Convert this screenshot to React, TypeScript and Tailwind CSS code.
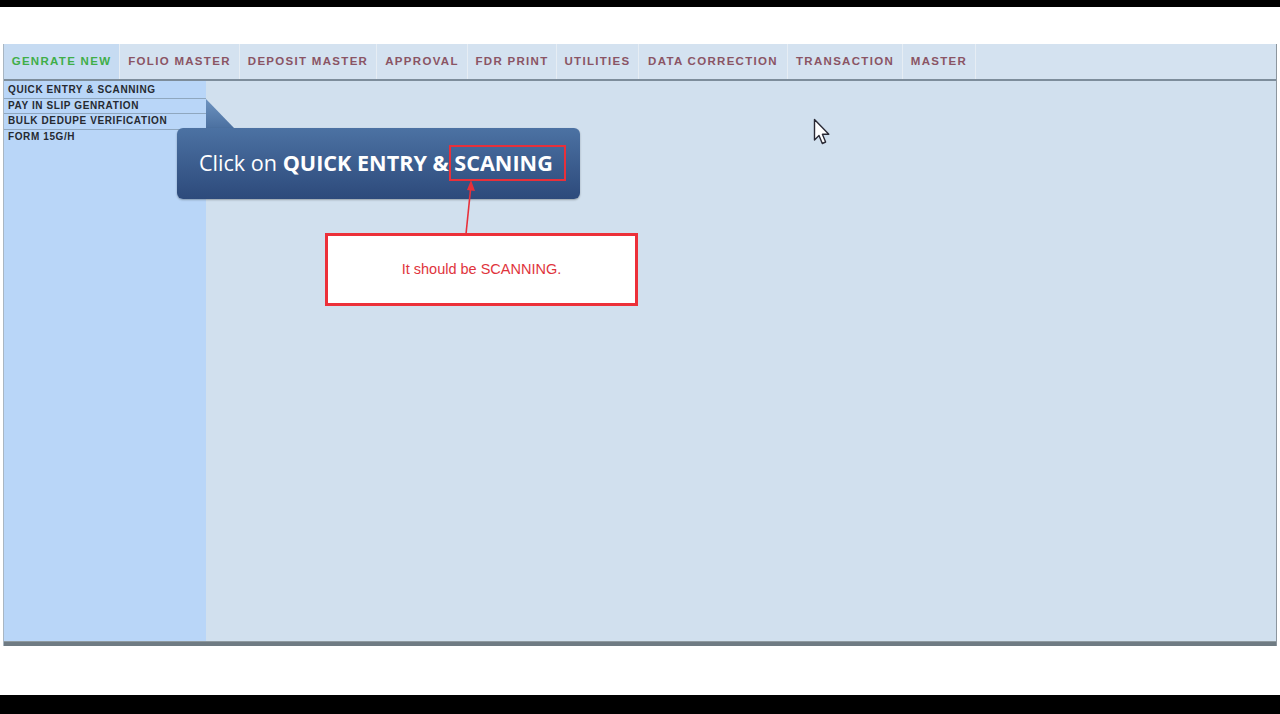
import React from "react";

const tabs = [
  { label: "GENRATE NEW", active: true, w: "w-[116px]" },
  { label: "FOLIO MASTER", w: "w-[120px]" },
  { label: "DEPOSIT MASTER", w: "w-[137px]" },
  { label: "APPROVAL", w: "w-[91px]" },
  { label: "FDR PRINT", w: "w-[89px]" },
  { label: "UTILITIES", w: "w-[82px]" },
  { label: "DATA CORRECTION", w: "w-[149px]" },
  { label: "TRANSACTION", w: "w-[115px]" },
  { label: "MASTER", w: "w-[73px]" },
];

const menu = ["QUICK ENTRY & SCANNING", "PAY IN SLIP GENRATION", "BULK DEDUPE VERIFICATION", "FORM 15G/H"];

export default function App() {
  return (
    <div className="w-[1280px] h-[714px] bg-white flex flex-col overflow-hidden" style={{ fontFamily: '"Liberation Sans", Arial, sans-serif' }}>
      <div className="h-[7px] bg-black shrink-0" />
      <div className="h-[37px] bg-white shrink-0" />
      <div className="relative ml-[3px] w-[1274px] h-[602px] flex flex-col border-r border-[#8c969e] border-l border-l-[#a9b6c2] shrink-0">
        {/* tab bar */}
        <div className="h-[37px] bg-[#d4e2f0] flex items-stretch border-b-[2px] border-[#7d8d9b] shrink-0">
          {tabs.map((t) => (
            <div
              key={t.label}
              className={`${t.w} flex items-center justify-center border-r border-[#e6edf4] text-[11.5px] font-bold tracking-[1.3px] pt-[1px] ${t.active ? "bg-[#c6dbf2] text-[#3fae48]" : "text-[#8a5464]"}`}
            >
              {t.label}
            </div>
          ))}
        </div>
        {/* body */}
        <div className="flex-1 flex bg-[#d1e0ee]">
          <div className="w-[202px] bg-[#b9d6f8] flex flex-col pt-[2px]">
            {menu.map((m, i) => (
              <div
                key={m}
                className={`h-[15.5px] flex items-center pl-[4px] text-[10px] font-bold tracking-[0.6px] text-[#262a31] leading-none ${i < 3 ? "border-b border-[#8fa7bf]" : ""}`}
              >
                {m}
              </div>
            ))}
          </div>
          <div className="flex-1" />
        </div>
        <div className="h-[5px] bg-[#6f7b83] shrink-0 border-t border-[#8e999f]" />

        {/* callout tail */}
        <svg className="absolute left-[201px] top-[55px]" width="32" height="32" viewBox="0 0 32 32">
          <defs>
            <linearGradient id="tail" x1="0" y1="0" x2="0" y2="1">
              <stop offset="0" stopColor="#6d93c0" />
              <stop offset="1" stopColor="#4a6f9f" />
            </linearGradient>
          </defs>
          <polygon points="1,0 30,30 1,30" fill="url(#tail)" />
        </svg>
        {/* callout */}
        <div className="absolute left-[173px] top-[84px] w-[403px] h-[71px] rounded-[6px] bg-gradient-to-b from-[#4c72a3] to-[#2d4a7b] shadow-[0_1px_2px_rgba(0,0,0,0.3)] flex items-center pl-[22px]">
          <span className="text-white text-[21.6px]" style={{ fontFamily: '"Open Sans", "Noto Sans", sans-serif' }}>
            Click on <span className="font-bold">QUICK ENTRY &amp; SCANING</span>
          </span>
        </div>
        {/* red highlight box */}
        <div className="absolute left-[445px] top-[101px] w-[117px] h-[36px] border-[2.5px] border-[#e8303a]" />
        {/* arrow */}
        <svg className="absolute left-[455px] top-[135px]" width="24" height="56" viewBox="0 0 24 56">
          <line x1="7" y1="55" x2="12" y2="6" stroke="#e8303a" strokeWidth="1.6" />
          <polygon points="12,1 16,12 8,11" fill="#e8303a" />
        </svg>
        {/* annotation box */}
        <div className="absolute left-[321px] top-[189px] w-[313px] h-[73px] bg-white border-[3px] border-[#ec3039] flex items-center justify-center">
          <span className="text-[#e0343c] text-[14.5px] pt-[1px]" style={{ fontFamily: '"Liberation Sans", Arial, sans-serif' }}>It should be SCANNING.</span>
        </div>
        {/* cursor */}
        <svg className="absolute left-[809px] top-[74px]" width="20" height="28" viewBox="0 0 20 28">
          <path d="M1.5 1.5 L1.5 22 L6 17.5 L9.3 25.5 L12.6 24 L9.4 16.3 L15.8 16.3 Z" fill="#ffffff" stroke="#2a2a35" strokeWidth="1.4" strokeLinejoin="round" />
        </svg>
      </div>
      <div className="flex-1 bg-white" />
      <div className="h-[19px] bg-black shrink-0" />
    </div>
  );
}
